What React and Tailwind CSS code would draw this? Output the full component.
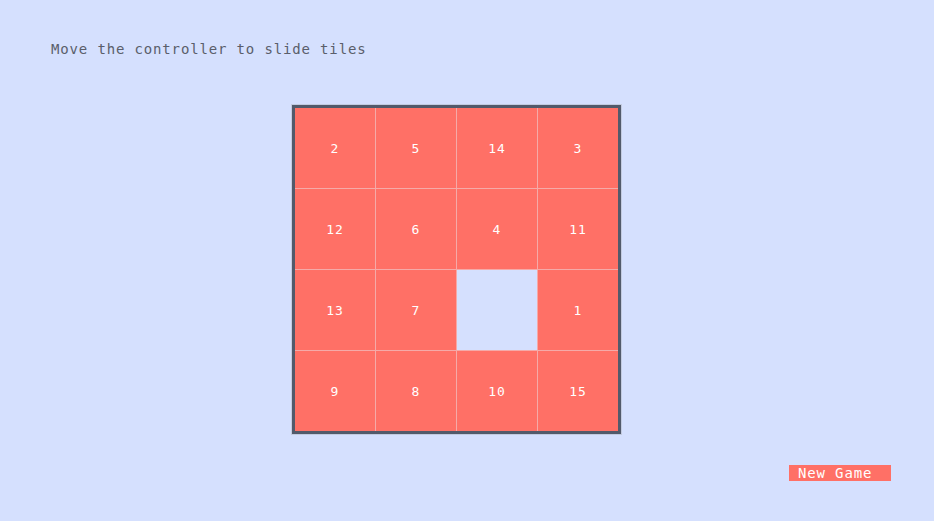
import React, { useState } from "react";

const START = [2, 5, 14, 3, 12, 6, 4, 11, 13, 7, 0, 1, 9, 8, 10, 15];

export default function App() {
  const [tiles, setTiles] = useState(START);

  const slide = idx => {
    const empty = tiles.indexOf(0);
    const r = Math.floor(idx / 4), c = idx % 4;
    const er = Math.floor(empty / 4), ec = empty % 4;
    if (Math.abs(r - er) + Math.abs(c - ec) !== 1) return;
    const next = [...tiles];
    next[empty] = tiles[idx];
    next[idx] = 0;
    setTiles(next);
  };

  const shuffle = () => {
    const next = [...tiles].sort(() => Math.random() - 0.5);
    setTiles(next);
  };

  return (
    <div
      className="h-[521px] w-full bg-[#d5e0fe] flex flex-col pt-[40px] pl-[51px]"
      style={{ fontFamily: '"DejaVu Sans Mono", "Liberation Mono", monospace' }}
    >
      <p className="text-[14px] leading-[18px] tracking-[0.85px] text-[#5a5e6b]">
        Move the controller to slide tiles
      </p>

      {/* board */}
      <div className="mt-[47px] ml-[241px] w-fit border-[3px] border-[#525a6b] shadow-[0_0_0_1px_#c3cbe0]">
        <div className="grid grid-cols-4 gap-px bg-[#f5aaa8]">
          {tiles.map((n, i) =>
            n === 0 ? (
              <div key={i} className="w-[80px] h-[80px] bg-[#d5e0fe]" />
            ) : (
              <div
                key={i}
                onClick={() => slide(i)}
                className="w-[80px] h-[80px] bg-[#ff7066] flex items-center justify-center pt-[2px] text-white text-[13px] tracking-[1px] cursor-pointer"
              >
                {n}
              </div>
            )
          )}
        </div>
      </div>

      <button
        onClick={shuffle}
        className="mt-[31px] ml-[738px] w-[102px] h-[16px] bg-[#ff7066] text-white text-[14px] leading-[16px] tracking-[0.85px] text-left pl-[9px]"
      >
        New Game
      </button>
    </div>
  );
}
